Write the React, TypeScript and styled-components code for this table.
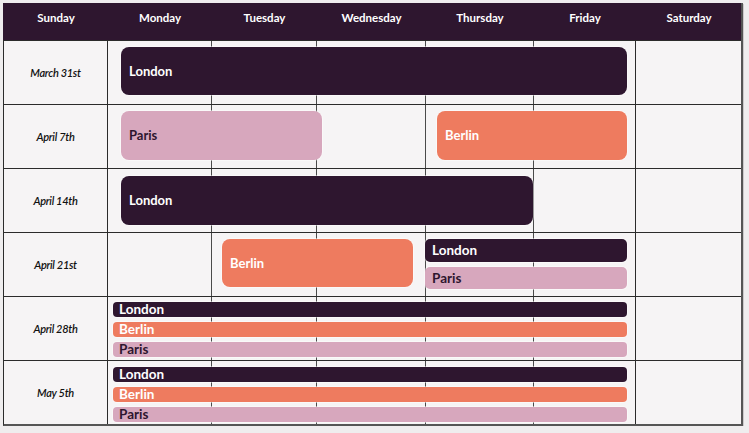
import React from "react";
import styled, { createGlobalStyle } from "styled-components";

const GlobalStyle = createGlobalStyle`
  html, body { margin: 0; padding: 0; background: #efedee; }
  body { font-family: Lato, "Open Sans", sans-serif; }
  * { box-sizing: border-box; }
`;

const COLS = "104px 104px 105px 109px 108px 102px 106px";

const Page = styled.div`
  padding: 3px 0 0 3px;
`;

const Table = styled.div`
  width: 740px;
  background: #f6f4f5;
  border-left: 1px solid #2b2b2b;
  border-right: 2px solid #555;
  border-bottom: 2px solid #555;
  box-shadow: 1px 1px 0 rgba(0,0,0,0.15);
`;

const Header = styled.div`
  display: grid;
  grid-template-columns: ${COLS};
  height: 37px;
  background: #2e162f;
  margin-left: -1px;
  padding-left: 1px;
`;

const HeadCell = styled.div`
  display: flex;
  justify-content: center;
  padding-top: 8px;
  color: #fff;
  font-weight: 700;
  font-size: 11.5px;
  line-height: 14px;
`;

const Week = styled.div`
  display: grid;
  grid-template-columns: ${COLS};
  grid-template-rows: 63px;
  height: 64px;
  border-top: 1px solid #2b2b2b;
`;

const DateCell = styled.div`
  grid-row: 1;
  grid-column: 1;
  display: flex;
  align-items: center;
  justify-content: center;
  border-right: 1px solid #2b2b2b;
  font-style: italic;
  font-weight: 600;
  font-size: 11px;
  color: #111;
  letter-spacing: -0.3px;
`;

const DayCell = styled.div<{ $col: number; $strong?: boolean }>`
  grid-row: 1;
  grid-column: ${(p) => p.$col};
  border-right: ${(p) => (p.$col === 7 ? "none" : `1px solid ${p.$strong ? "#2b2b2b" : "#4a4a4a"}`)};
`;

type Kind = "london" | "berlin" | "paris";

const palette: Record<Kind, { bg: string; fg: string }> = {
  london: { bg: "#2e162f", fg: "#ffffff" },
  berlin: { bg: "#ee7b5f", fg: "#ffffff" },
  paris: { bg: "#d7a7bd", fg: "#2e162f" },
};

const Slot = styled.div<{ $from: number; $to: number; $ml: number; $mr: number; $mt: number }>`
  grid-row: 1;
  grid-column: ${(p) => p.$from} / ${(p) => p.$to};
  margin: ${(p) => p.$mt}px ${(p) => p.$mr}px 0 ${(p) => p.$ml}px;
  align-self: start;
  position: relative;
  z-index: 1;
  display: flex;
  flex-direction: column;
  gap: 5px;
`;

const Event = styled.div<{ $kind: Kind; $h: number; $radius: number; $pad: number; $size: number }>`
  height: ${(p) => p.$h}px;
  background: ${(p) => palette[p.$kind].bg};
  color: ${(p) => palette[p.$kind].fg};
  border-radius: ${(p) => p.$radius}px;
  box-shadow: 0 0 0 1px rgba(255, 255, 255, 0.45);
  display: flex;
  align-items: center;
  padding-left: ${(p) => p.$pad}px;
  font-weight: 700;
  font-size: ${(p) => p.$size}px;
  line-height: 15px;
  white-space: nowrap;
  overflow: hidden;
`;

const label: Record<Kind, string> = { london: "London", berlin: "Berlin", paris: "Paris" };

type Placed = {
  from: number;
  to: number;
  ml: number;
  mr: number;
  mt: number;
  items: { kind: Kind; h: number }[];
  big?: boolean;
};

const weeks: { date: string; slots: Placed[] }[] = [
  { date: "March 31st", slots: [{ from: 2, to: 7, ml: 13, mr: 9, mt: 6, big: true, items: [{ kind: "london", h: 48 }] }] },
  {
    date: "April 7th",
    slots: [
      { from: 2, to: 4, ml: 13, mr: -5, mt: 6, big: true, items: [{ kind: "paris", h: 49 }] },
      { from: 5, to: 7, ml: 11, mr: 9, mt: 6, big: true, items: [{ kind: "berlin", h: 49 }] },
    ],
  },
  { date: "April 14th", slots: [{ from: 2, to: 6, ml: 13, mr: 1, mt: 7, big: true, items: [{ kind: "london", h: 49 }] }] },
  {
    date: "April 21st",
    slots: [
      { from: 3, to: 5, ml: 10, mr: 13, mt: 6, big: true, items: [{ kind: "berlin", h: 48 }] },
      { from: 5, to: 7, ml: -1, mr: 9, mt: 6, items: [{ kind: "london", h: 23 }, { kind: "paris", h: 22 }] },
    ],
  },
  {
    date: "April 28th",
    slots: [{ from: 2, to: 7, ml: 5, mr: 9, mt: 5, items: [{ kind: "london", h: 15 }, { kind: "berlin", h: 15 }, { kind: "paris", h: 15 }] }],
  },
  {
    date: "May 5th",
    slots: [{ from: 2, to: 7, ml: 5, mr: 9, mt: 6, items: [{ kind: "london", h: 15 }, { kind: "berlin", h: 15 }, { kind: "paris", h: 15 }] }],
  },
];

const days = ["Sunday", "Monday", "Tuesday", "Wednesday", "Thursday", "Friday", "Saturday"];

export default function App() {
  return (
    <Page>
      <GlobalStyle />
      <Table>
        <Header>
          {days.map((d) => (
            <HeadCell key={d}>{d}</HeadCell>
          ))}
        </Header>
        {weeks.map((w) => (
          <Week key={w.date}>
            <DateCell>{w.date}</DateCell>
            {[2, 3, 4, 5, 6, 7].map((c) => (
              <DayCell key={c} $col={c} $strong={c === 6} />
            ))}
            {w.slots.map((s, i) => (
              <Slot key={i} $from={s.from} $to={s.to} $ml={s.ml} $mr={s.mr} $mt={s.mt}>
                {s.items.map((it, j) => (
                  <Event
                    key={j}
                    $kind={it.kind}
                    $h={it.h}
                    $size={s.big ? 13 : 13.5}
                    $radius={s.big ? 8 : s.items[0].h > 20 ? 5 : 4}
                    $pad={s.big ? 8 : s.items[0].h > 20 ? 7 : 6}
                  >
                    {label[it.kind]}
                  </Event>
                ))}
              </Slot>
            ))}
          </Week>
        ))}
      </Table>
    </Page>
  );
}
